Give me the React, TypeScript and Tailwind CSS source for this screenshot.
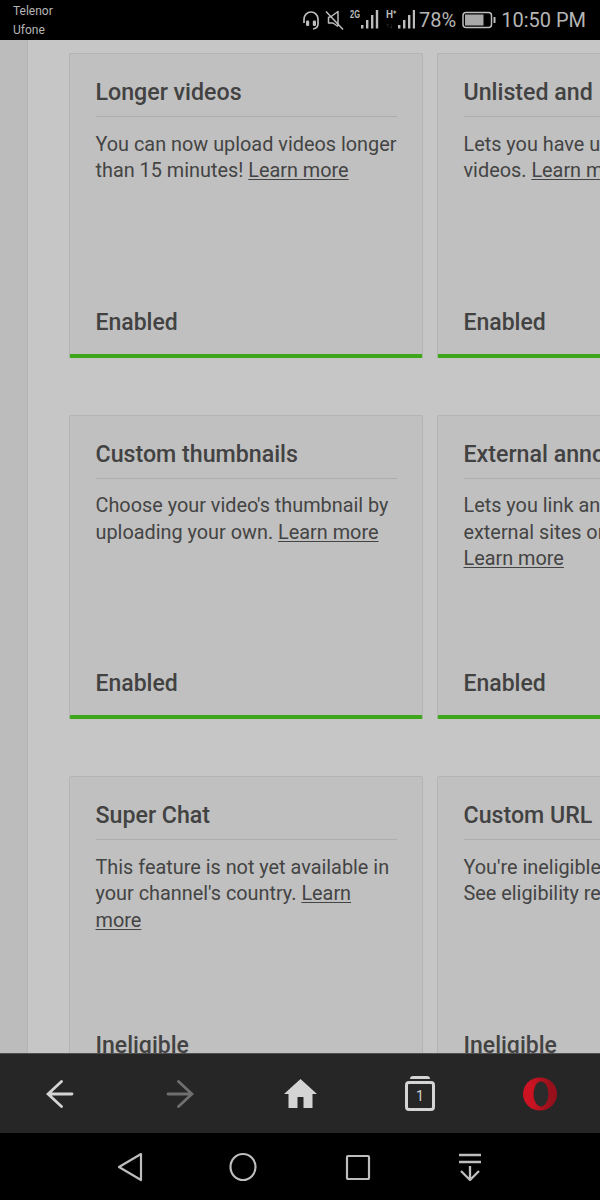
function Bars({ x }: { x: number }) {
  return (
    <g fill="#bdbdbd">
      <rect x={x} y="16" width="2.400" height="3.500" />
      <rect x={x + 5} y="11" width="2.400" height="8.500" />
      <rect x={x + 10} y="6" width="2.400" height="13.500" />
      <rect x={x + 14.800} y="1" width="2.400" height="18.500" />
    </g>
  );
}

function StatusBar() {
  return (
    <div className="flex h-10 shrink-0 items-center justify-between bg-black pl-[13px] pr-[14px] text-[#b5b5b5]">
      <div className="pt-[1px] text-[12px] leading-[18.5px]">
        <div>Telenor</div>
        <div>Ufone</div>
      </div>
      <div className="flex items-center">
        <svg width="20" height="22" viewBox="0 0 20 22" fill="none" stroke="#bdbdbd" strokeWidth="1.700" className="mr-[4px]">
          <path d="M3 14V10a7 7 0 0 1 14 0v5c0 3-2 4.500-5 5" />
          <rect x="5" y="11.500" width="3.200" height="5.500" rx="1.200" fill="#bdbdbd" stroke="none" />
          <rect x="11.800" y="11.500" width="3.200" height="5.500" rx="1.200" fill="#bdbdbd" stroke="none" />
        </svg>
        <svg width="19" height="20" viewBox="0 0 19 20" fill="none" stroke="#bdbdbd" strokeWidth="1.500" className="mr-[5px]">
          <path d="M3.500 7H5.500L13 1.500V16M13 16.500 8 13H3.500V7" strokeLinejoin="round" />
          <path d="M1 1.500 18 19.500" />
        </svg>
        <svg width="30" height="22" viewBox="0 0 30 22" className="mr-[6px]">
          <text x="1" y="8.500" fontSize="10" fontWeight="700" fill="#bdbdbd" textLength="10" lengthAdjust="spacingAndGlyphs" fontFamily="Liberation Sans">2G</text>
          <Bars x={12} />
        </svg>
        <svg width="30" height="22" viewBox="0 0 30 22">
          <text x="1" y="8.500" fontSize="10" fontWeight="700" fill="#bdbdbd" textLength="10" lengthAdjust="spacingAndGlyphs" fontFamily="Liberation Sans">H⁺</text>
          <text x="1" y="19" fontSize="7" fill="#5a5a5a" fontFamily="Liberation Sans">↑↓</text>
          <Bars x={13} />
        </svg>
        <span className="ml-[4px] text-[20px] leading-none">78%</span>
        <svg width="34" height="18" viewBox="0 0 34 18" fill="none" className="ml-[6px]">
          <rect x="1" y="1.500" width="28.500" height="15" rx="3" stroke="#bdbdbd" strokeWidth="1.500" />
          <rect x="3" y="3.500" width="18.500" height="11" fill="#a8a8a8" />
          <rect x="31.500" y="6" width="2" height="6" rx="0.500" fill="#bdbdbd" />
        </svg>
        <span className="ml-[5px] text-[20px] leading-none">10:50 PM</span>
      </div>
    </div>
  );
}

type Card = { title: string; body: React.ReactNode; status: string; green: boolean };

const L = ({ children }: { children: React.ReactNode }) => <span className="underline underline-offset-2">{children}</span>;

const rows: Card[][] = [
  [
    { title: 'Longer videos', body: <>You can now upload videos longer than 15 minutes! <L>Learn more</L></>, status: 'Enabled', green: true },
    { title: 'Unlisted and', body: <>Lets you have unlisted or private videos. <L>Learn more</L></>, status: 'Enabled', green: true },
  ],
  [
    { title: 'Custom thumbnails', body: <>Choose your video's thumbnail by uploading your own. <L>Learn more</L></>, status: 'Enabled', green: true },
    { title: 'External annotations', body: <>Lets you link annotations to external sites or merchandise. <L>Learn more</L></>, status: 'Enabled', green: true },
  ],
  [
    { title: 'Super Chat', body: <>This feature is not yet available in your channel's country. <L>Learn more</L></>, status: 'Ineligible', green: false },
    { title: 'Custom URL', body: <>You're ineligible for this feature. See eligibility requirements</>, status: 'Ineligible', green: false },
  ],
];

function FeatureCard({ card }: { card: Card }) {
  return (
    <div
      className={`flex h-[304.5px] w-[354px] shrink-0 flex-col rounded-[2px] border border-b-[4px] border-[#b4b4b4] bg-[#c0c0c0] pl-[25.5px] pr-[25px] ${card.green ? 'border-b-[#3da61b]' : ''}`}
    >
      <div className="truncate border-b border-[#adadad] pb-[10px] pt-[24px] text-[23.2px] font-medium leading-[28px] text-[#424242]">
        {card.title}
      </div>
      <div className="mt-[14.5px] flex-1 text-[19.85px] leading-[26.5px] text-[#444444]">{card.body}</div>
      <div className="pb-[17px] text-[23px] font-medium leading-[28px] text-[#424242]">{card.status}</div>
    </div>
  );
}

function BrowserBar() {
  return (
    <div className="flex h-20 shrink-0 items-center justify-around border-t border-[#4f4f4f] bg-[#262626]">
      <div className="flex w-[120px] justify-center">
        <svg width="28" height="28" viewBox="0 0 28 28" fill="none" stroke="#d4d4d4" strokeWidth="2.800" strokeLinecap="round">
          <path d="M26 14H2.500M15.500 1.500 2 14l13.500 12.500" />
        </svg>
      </div>
      <div className="flex w-[120px] justify-center">
        <svg width="28" height="28" viewBox="0 0 28 28" fill="none" stroke="#6f6f6f" strokeWidth="2.800" strokeLinecap="round">
          <path d="M2 14h23.500M12.500 1.500 26 14 12.500 26.500" />
        </svg>
      </div>
      <div className="flex w-[120px] justify-center">
        <svg width="33" height="30" viewBox="0 0 33 30" fill="#d4d4d4">
          <path d="M16.500 0 33 15h-4.500v14h-9V18h-6v11h-9V15H0z" />
        </svg>
      </div>
      <div className="flex w-[120px] justify-center">
        <div className="flex flex-col items-center">
          <div className="h-[3px] w-[20px] rounded-t-[3px] bg-[#d4d4d4]" />
          <div className="mt-[2px] flex h-[30px] w-[30px] items-center justify-center rounded-[4px] border-[3px] border-[#d4d4d4] text-[14px] leading-none text-[#d4d4d4]">
            1
          </div>
        </div>
      </div>
      <div className="flex w-[120px] justify-center">
        <svg width="34" height="34" viewBox="0 0 34 34">
          <defs>
            <linearGradient id="opera" x1="0" x2="1" y1="0" y2="0">
              <stop offset="0.250" stopColor="#cc1322" />
              <stop offset="0.800" stopColor="#98101c" />
            </linearGradient>
          </defs>
          <ellipse cx="17" cy="17" rx="17" ry="16.500" fill="url(#opera)" />
          <ellipse cx="18" cy="17" rx="7.500" ry="12.500" fill="#2b2b2b" />
        </svg>
      </div>
    </div>
  );
}

function NavBar() {
  return (
    <div className="flex h-[67px] shrink-0 items-center bg-black pl-[116px]">
      <svg width="28" height="30" viewBox="0 0 28 30" fill="none" stroke="#bdbdbd" strokeWidth="2.200" strokeLinejoin="round">
        <path d="M25 2 3 15l22 13z" />
      </svg>
      <svg width="30" height="30" viewBox="0 0 30 30" fill="none" stroke="#bdbdbd" strokeWidth="2.200" className="ml-[84px]">
        <ellipse cx="15" cy="15" rx="12.500" ry="13" />
      </svg>
      <svg width="26" height="26" viewBox="0 0 26 26" fill="none" stroke="#bdbdbd" strokeWidth="2.200" className="ml-[87px]">
        <rect x="2" y="2" width="22" height="23" rx="1" />
      </svg>
      <svg width="24" height="28" viewBox="0 0 24 28" fill="none" stroke="#bdbdbd" strokeWidth="2.300" className="ml-[87px]">
        <path d="M1 2h22M1 9h22M12 13v13M3 18l9 9 9-9" />
      </svg>
    </div>
  );
}

export default function App() {
  return (
    <div className="flex h-[1200px] w-[600px] flex-col overflow-hidden font-['Roboto',sans-serif]">
      <StatusBar />
      <div className="flex min-h-0 flex-1 overflow-hidden bg-[#c6c6c6]">
        <div className="w-[28px] shrink-0 border-r border-[#b6b6b6] bg-[#bcbcbc]" />
        <div className="flex flex-col gap-[57px] pl-[41px] pt-[13px]">
          {rows.map((row) => (
            <div key={row[0].title} className="flex gap-[14px]">
              {row.map((card) => (
                <FeatureCard key={card.title} card={card} />
              ))}
            </div>
          ))}
        </div>
      </div>
      <BrowserBar />
      <NavBar />
    </div>
  );
}
